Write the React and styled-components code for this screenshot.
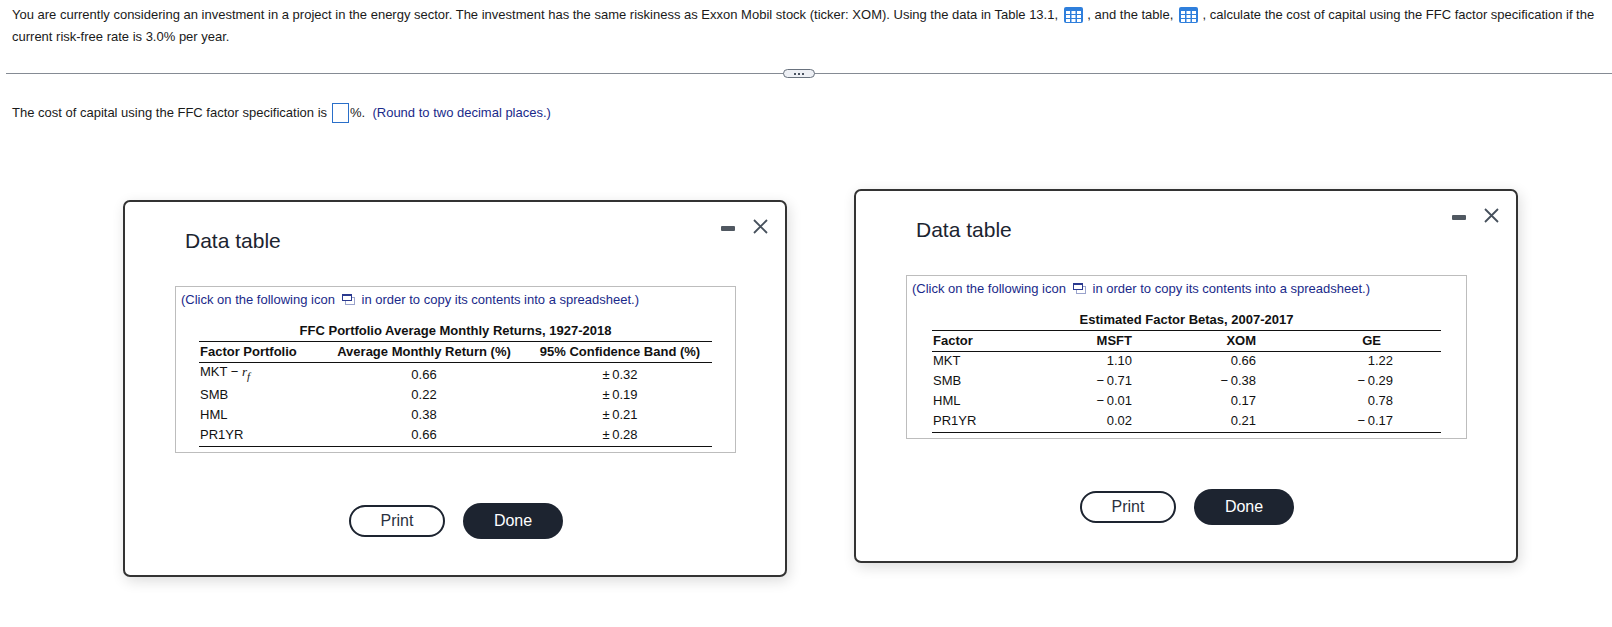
import React from "react";
import styled, { createGlobalStyle } from "styled-components";

const Global = createGlobalStyle`
  html, body { margin: 0; padding: 0; background: #fff; }
  body { font-family: "Liberation Sans", Arial, sans-serif; font-size: 13px; color: #1a1a1a; }
`;

const Page = styled.div`
  position: relative;
  width: 1612px;
  height: 627px;
  overflow: hidden;
`;

const Intro = styled.p`
  margin: 0;
  padding: 4px 12px 0;
  line-height: 22px;
  height: 69px;
  color: #1a1a1a;
`;

const Divider = styled.div`
  position: relative;
  height: 1px;
  margin: 0 0 0 6px;
  background: #858b94;
`;

const Ellipsis = styled.div`
  position: absolute;
  left: 777px;
  top: -4px;
  width: 32px;
  height: 9px;
  box-sizing: border-box;
  border: 1px solid #69727e;
  border-radius: 5px;
  background: #eef0f5;
  display: flex;
  align-items: center;
  justify-content: center;
  gap: 2px;
`;

const Dot = styled.span`
  width: 2px;
  height: 2px;
  background: #4a5361;
`;

const Question = styled.p`
  margin: 0;
  padding: 28px 12px 0;
  display: flex;
  align-items: center;
  height: 21px;
  white-space: pre;
`;

const AnswerBox = styled.span`
  display: inline-block;
  box-sizing: border-box;
  width: 17px;
  height: 20px;
  margin: 0 1px 0 5px;
  border: 1px solid #2a6fc9;
`;

const Hint = styled.span`
  color: #1a2a8a;
`;

const Dialog = styled.section`
  position: absolute;
  left: ${(p) => p.$left}px;
  top: ${(p) => p.$top}px;
  width: 664px;
  box-sizing: border-box;
  border: 2px solid #333;
  border-radius: 7px;
  background: #fff;
  box-shadow: 2px 4px 14px rgba(0, 0, 0, 0.14);
  padding: 0 0 36px 50px;
`;

const TitleBar = styled.header`
  height: 84px;
  display: flex;
  align-items: flex-start;
  justify-content: space-between;
`;

const Title = styled.h2`
  margin: 26px 0 0 10px;
  font-size: 21px;
  font-weight: 400;
  line-height: 26px;
  color: #1c2430;
`;

const WindowControls = styled.div`
  display: flex;
  align-items: center;
  gap: 18px;
  margin: 17px 17px 0 0;
`;

const MinimizeBar = styled.span`
  display: block;
  width: 14px;
  height: 5px;
  margin-top: 3px;
  border-radius: 1px;
  background: #505861;
`;

const TableBox = styled.div`
  width: 561px;
  box-sizing: border-box;
  border: 1px solid #bdbdbd;
  padding: 0 0 5px ${(p) => p.$inset}px;
`;

const CopyNote = styled.div`
  display: flex;
  align-items: center;
  height: 24px;
  margin: 0 0 12px ${(p) => p.$back}px;
  color: #1a2a8a;
  white-space: pre;
`;

const DataTable = styled.table`
  width: ${(p) => p.$width}px;
  border-collapse: collapse;
  table-layout: fixed;
  color: #111;
`;

const Caption = styled.th`
  font-weight: 700;
  height: 15px;
  line-height: 15px;
  padding: 0 0 3px;
  text-align: center;
  border-bottom: 1px solid #111;
`;

const HeadCell = styled.th`
  box-sizing: border-box;
  font-weight: 700;
  height: 21px;
  padding: 0 ${(p) => p.$pad || 0}px 2px ${(p) => (p.$align === "left" ? 1 : 0)}px;
  text-align: ${(p) => p.$align || "center"};
  border-bottom: 1px solid #111;
`;

const Cell = styled.td`
  box-sizing: border-box;
  height: 20px;
  padding: 0 ${(p) => p.$pad || 0}px 2px ${(p) => (p.$align === "left" ? 1 : 0)}px;
  text-align: ${(p) => p.$align || "center"};
  vertical-align: middle;
`;

const Row = styled.tr`
  &:last-child td {
    height: 21px;
    border-bottom: 1px solid #111;
  }
`;

const TallCell = styled(Cell)`
  height: 23px;
  padding-bottom: 0;
`;

const Top = styled.span`
  position: relative;
  top: -2px;
`;

const Var = styled.i`
  font-family: "Liberation Serif", serif;
  font-size: 13px;
`;

const Sub = styled.sub`
  font-size: 11px;
  font-style: italic;
  font-family: "Liberation Serif", serif;
  line-height: 0;
`;

const Buttons = styled.div`
  display: flex;
  align-items: center;
  gap: 18px;
  margin: 50px 0 0 174px;
`;

const Btn = styled.button`
  font-family: "Liberation Sans", Arial, sans-serif;
  font-size: 16px;
  border-radius: 18px;
  box-sizing: border-box;
  padding: 0;
  ${(p) =>
    p.$primary
      ? `width: 100px; height: 36px; background: #1d2430; color: #fff; border: none;`
      : `width: 96px; height: 32px; background: #fff; color: #2a3140; border: 2px solid #1d2430;`}
`;

const CloseIcon = () => (
  <svg width="15" height="15" viewBox="0 0 15 15" fill="none" stroke="#46505c" strokeWidth="1.8">
    <path d="M1 1 L14 14 M14 1 L1 14" />
  </svg>
);

const TableIcon = () => (
  <svg width="19" height="16" viewBox="0 0 19 16" style={{ verticalAlign: "-4px", margin: "0 1px 0 2px" }}>
    <rect width="19" height="16" rx="2" fill="#2f7fdc" />
    <g fill="#fff">
      {[4, 8, 12].map((y) =>
        [2, 7.5, 13].map((x) => <rect key={`${x}-${y}`} x={x} y={y} width="4" height="3" />)
      )}
    </g>
  </svg>
);

const CopyIcon = () => (
  <svg width="13" height="11" viewBox="0 0 13 11" fill="none" style={{ margin: "0 7px 0 3px" }}>
    <rect x="3.5" y="3.5" width="9" height="7" stroke="#9aa3cc" />
    <rect x="0.5" y="0.5" width="9" height="6" fill="#fff" stroke="#2b3a8f" />
    <rect x="0.5" y="0.5" width="9" height="1.5" fill="#2b3a8f" />
  </svg>
);

const THIN = "\u2009";
const MINUS = "\u2212" + THIN;
const PLUSMINUS = "\u00b1" + THIN;

const returns = [
  ["SMB", "0.22", "0.19"],
  ["HML", "0.38", "0.21"],
  ["PR1YR", "0.66", "0.28"],
];

const betas = [
  ["MKT", "1.10", "0.66", "1.22"],
  ["SMB", MINUS + "0.71", MINUS + "0.38", MINUS + "0.29"],
  ["HML", MINUS + "0.01", "0.17", "0.78"],
  ["PR1YR", "0.02", "0.21", MINUS + "0.17"],
];

const Note = ({ back }) => (
  <CopyNote $back={back}>
    (Click on the following icon <CopyIcon />
    in order to copy its contents into a spreadsheet.)
  </CopyNote>
);

const Header = () => (
  <TitleBar>
    <Title>Data table</Title>
    <WindowControls>
      <MinimizeBar />
      <CloseIcon />
    </WindowControls>
  </TitleBar>
);

const Actions = () => (
  <Buttons>
    <Btn>Print</Btn>
    <Btn $primary>Done</Btn>
  </Buttons>
);

export default function App() {
  return (
    <Page>
      <Global />
      <Intro>
        You are currently considering an investment in a project in the energy sector. The investment has the same
        riskiness as Exxon Mobil stock (ticker: XOM). Using the data in Table 13.1, <TableIcon /> , and the table,{" "}
        <TableIcon /> , calculate the cost of capital using the FFC factor specification if the current risk-free rate
        is 3.0% per year.
      </Intro>
      <Divider>
        <Ellipsis>
          <Dot />
          <Dot />
          <Dot />
        </Ellipsis>
      </Divider>
      <Question>
        The cost of capital using the FFC factor specification is
        <AnswerBox />%. <Hint> (Round to two decimal places.)</Hint>
      </Question>

      <Dialog $left={123} $top={200}>
        <Header />
        <TableBox $inset={23}>
          <Note back={-18} />
          <DataTable $width={513}>
            <colgroup>
              <col style={{ width: 121 }} />
              <col style={{ width: 208 }} />
              <col style={{ width: 184 }} />
            </colgroup>
            <thead>
              <tr>
                <Caption colSpan={3}>FFC Portfolio Average Monthly Returns, 1927-2018</Caption>
              </tr>
              <tr>
                <HeadCell $align="left">Factor Portfolio</HeadCell>
                <HeadCell>Average Monthly Return (%)</HeadCell>
                <HeadCell>95% Confidence Band (%)</HeadCell>
              </tr>
            </thead>
            <tbody>
              <Row>
                <TallCell $align="left">
                  <Top>
                    MKT {"\u2212"} <Var>r</Var>
                    <Sub>f</Sub>
                  </Top>
                </TallCell>
                <TallCell>0.66</TallCell>
                <TallCell>{PLUSMINUS + "0.32"}</TallCell>
              </Row>
              {returns.map(([name, avg, band]) => (
                <Row key={name}>
                  <Cell $align="left">{name}</Cell>
                  <Cell>{avg}</Cell>
                  <Cell>{PLUSMINUS + band}</Cell>
                </Row>
              ))}
            </tbody>
          </DataTable>
        </TableBox>
        <Actions />
      </Dialog>

      <Dialog $left={854} $top={189}>
        <Header />
        <TableBox $inset={25}>
          <Note back={-20} />
          <DataTable $width={509}>
            <colgroup>
              <col style={{ width: 100 }} />
              <col style={{ width: 100 }} />
              <col style={{ width: 124 }} />
              <col style={{ width: 185 }} />
            </colgroup>
            <thead>
              <tr>
                <Caption colSpan={4}>Estimated Factor Betas, 2007-2017</Caption>
              </tr>
              <tr>
                <HeadCell $align="left">Factor</HeadCell>
                <HeadCell $align="right">MSFT</HeadCell>
                <HeadCell $align="right">XOM</HeadCell>
                <HeadCell $align="right" $pad={60}>
                  GE
                </HeadCell>
              </tr>
            </thead>
            <tbody>
              {betas.map(([name, a, b, c]) => (
                <Row key={name}>
                  <Cell $align="left">{name}</Cell>
                  <Cell $align="right">{a}</Cell>
                  <Cell $align="right">{b}</Cell>
                  <Cell $align="right" $pad={48}>
                    {c}
                  </Cell>
                </Row>
              ))}
            </tbody>
          </DataTable>
        </TableBox>
        <Actions />
      </Dialog>
    </Page>
  );
}
